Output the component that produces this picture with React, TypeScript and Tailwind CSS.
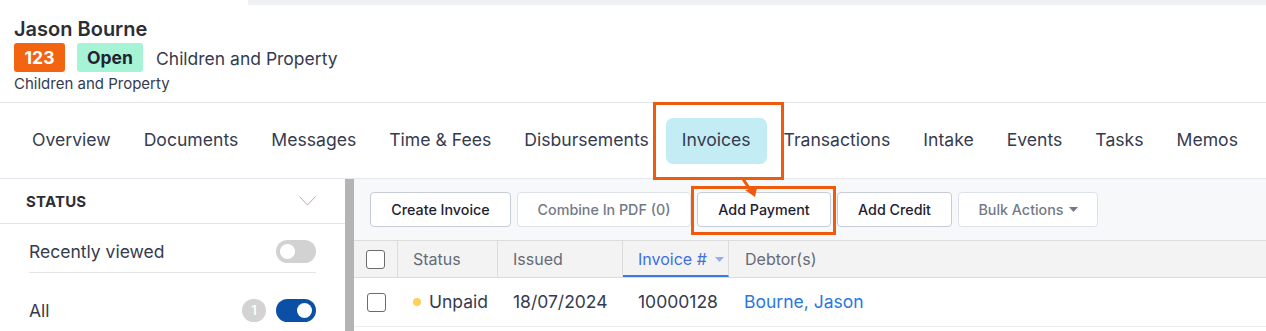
import React from 'react';

const tabs = ['Overview', 'Documents', 'Messages', 'Time & Fees', 'Disbursements', 'Invoices', 'Transactions', 'Intake', 'Events', 'Tasks', 'Memos'];

function Toggle({ on }: { on: boolean }) {
  return (
    <span
      className={`flex h-[23px] w-[40px] items-center rounded-full px-[4px] ${
        on ? 'justify-end bg-[#0b4fa7]' : 'justify-start bg-[#d2d2d2]'
      }`}
    >
      <span className="h-[15px] w-[15px] rounded-full bg-white" />
    </span>
  );
}

function Checkbox() {
  return <span className="block h-[19px] w-[19px] rounded-[3px] border-[1.5px] border-[#6b6b6b] bg-white" />;
}

function Caret({ color }: { color: string }) {
  return (
    <svg width="9" height="5" viewBox="0 0 9 5">
      <path d="M0 0 L9 0 L4.5 5 Z" fill={color} />
    </svg>
  );
}

function Btn({ label, disabled, caret }: { label: string; disabled?: boolean; caret?: boolean }) {
  return (
    <button
      className={`flex h-[35px] w-full items-center justify-center gap-[5px] rounded-[4px] border bg-white text-[14.3px] font-medium ${
        disabled ? 'border-[#dde2ea] text-[#747a85]' : 'border-[#c5ccd8] text-[#1e2230]'
      }`}
    >
      {label}
      {caret && <Caret color="#747a85" />}
    </button>
  );
}

export default function App() {
  return (
    <div className="relative h-[331px] w-[1266px] overflow-hidden bg-white font-['Inter',sans-serif] text-[#353b4f]">
      <div className="ml-[248px] h-[5px] bg-[#eff0f4]" />

      {/* matter header */}
      <div className="h-[97px] px-[14px] pt-[12px]">
        <h1 className="text-[20px] font-semibold leading-[24px] text-[#2c2e36]">Jason Bourne</h1>
        <div className="mt-[2px] flex items-center">
          <span className="flex h-[29px] w-[51px] items-center justify-center rounded-[3px] bg-[#f26410] text-[17.5px] font-bold text-white">
            123
          </span>
          <span className="ml-[12px] flex h-[29px] w-[66px] items-center justify-center rounded-[3px] bg-[#a6f3d6] text-[17.5px] font-bold text-[#1f2430]">
            Open
          </span>
          <span className="ml-[13px] pt-[3px] text-[17.5px] text-[#353b4f]">Children and Property</span>
        </div>
        <p className="mt-[1px] text-[15px] leading-[22px] text-[#353b4f]">Children and Property</p>
      </div>

      {/* tabs */}
      <nav className="flex h-[77px] items-center gap-[1px] border-y border-[#e6e7ec] px-[16px]">
        {tabs.map((t) => (
          <span
            key={t}
            className={`flex h-[46px] shrink-0 items-center whitespace-nowrap rounded-[7px] px-[16px] text-[17.6px] ${
              t === 'Invoices' ? 'bg-[#c3ecf4]' : ''
            }`}
          >
            {t}
          </span>
        ))}
      </nav>

      <div className="flex h-[152px]">
        {/* sidebar */}
        <aside className="w-[345px]">
          <div className="flex h-[45px] items-center justify-between border-b border-[#e4e4e8] pl-[26px] pr-[29px]">
            <span className="pt-[2px] text-[15px] font-bold tracking-[0.2px] text-[#2c2e36]">STATUS</span>
            <svg width="17" height="10" viewBox="0 0 17 10" fill="none">
              <path d="M0.5 0.5 L8.5 9 L16.5 0.5" stroke="#c4a7a0" strokeWidth="1" />
            </svg>
          </div>
          <div className="mx-[29px] flex h-[49px] items-end justify-between border-b border-[#e4e4e8] pb-[9px]">
            <span className="text-[17.5px] leading-[22px]">Recently viewed</span>
            <Toggle on={false} />
          </div>
          <div className="mx-[29px] flex items-center justify-between pt-[26px]">
            <span className="text-[17.5px] leading-[23px]">All</span>
            <div className="flex items-center gap-[10px]">
              <span className="flex h-[23px] w-[24px] items-center justify-center rounded-full bg-[#d3d3d3] text-[13px] font-semibold text-white">
                1
              </span>
              <Toggle on />
            </div>
          </div>
        </aside>
        <div className="w-[9px] bg-[#b4b4b4]" />

        {/* invoices */}
        <section className="flex-1">
          <div className="flex h-[61px] items-center gap-[6px] bg-[#f7f8fa] pl-[16px]">
            <div className="w-[141px]"><Btn label="Create Invoice" /></div>
            <div className="w-[174px]"><Btn label="Combine In PDF (0)" disabled /></div>
            <div className="w-[134px]"><Btn label="Add Payment" /></div>
            <div className="w-[115px]"><Btn label="Add Credit" /></div>
            <div className="w-[140px]"><Btn label="Bulk Actions" disabled caret /></div>
          </div>
          <div className="flex h-[38px] items-stretch border-y border-[#dcdcdc] bg-[#f3f3f3] text-[16px] text-[#666b75]">
            <div className="flex w-[44px] items-center justify-center border-r border-[#dcdcdc]"><Checkbox /></div>
            <div className="flex w-[100px] items-center border-r border-[#dcdcdc] pl-[15px]">Status</div>
            <div className="flex w-[125px] items-center border-r border-[#dcdcdc] pl-[15px]">Issued</div>
            <div className="flex w-[106px] items-center gap-[8px] border-r border-b-2 border-r-[#dcdcdc] border-b-[#3b7be0] pl-[15px] pt-[2px] text-[#3f6fe0]">
              Invoice #
              <Caret color="#8fb0ee" />
            </div>
            <div className="flex items-center pl-[16px]">Debtor(s)</div>
          </div>
          <div className="flex h-[49px] items-center border-b border-[#ececec] text-[17.5px] text-[#353b4f]">
            <div className="flex w-[44px] justify-center"><Checkbox /></div>
            <div className="flex w-[100px] items-center gap-[8px] pl-[15px]">
              <span className="h-[8px] w-[8px] rounded-full bg-[#fdd05b]" />
              Unpaid
            </div>
            <div className="w-[125px] pl-[15px]">18/07/2024</div>
            <div className="w-[106px] pl-[15px]">10000128</div>
            <div className="pl-[15px] text-[#2a78dc]">Bourne, Jason</div>
          </div>
        </section>
      </div>

      {/* annotation overlays */}
      <div className="pointer-events-none absolute left-[653px] top-[102px] h-[78px] w-[131px] border-[3px] border-[#ef5b0c]" />
      <div className="pointer-events-none absolute left-[691px] top-[186px] h-[49px] w-[145px] border-[3px] border-[#ef5b0c]" />
      <svg className="pointer-events-none absolute left-[735px] top-[178px]" width="30" height="22" viewBox="0 0 30 22">
        <path d="M8 1 L16 13" stroke="#ef5b0c" strokeWidth="3" />
        <path d="M10 12 L22 10 L20 19 Z" fill="#ef5b0c" />
      </svg>
    </div>
  );
}
